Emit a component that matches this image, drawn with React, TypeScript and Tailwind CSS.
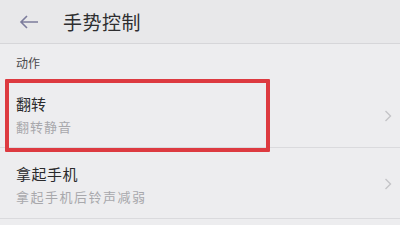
import React from "react";

const Chevron = () => (
  <svg width="8" height="12" viewBox="0 0 8 12" className="shrink-0">
    <path d="M1.5 1 L6.5 6 L1.5 11" fill="none" stroke="#c4c4c8" strokeWidth="1.4" />
  </svg>
);

export default function App() {
  return (
    <div
      className="w-[400px] h-[225px] overflow-hidden bg-[#ededef] flex flex-col"
      style={{ fontFamily: '"Noto Sans CJK SC", "Noto Sans", sans-serif' }}
    >
      <div className="h-[44px] shrink-0 bg-[#e8e8ea] border-b border-[#d6d6d9] flex items-center pl-[19px]">
        <svg width="20" height="14" viewBox="0 0 20 14">
          <path d="M8 1 L2 7 L8 13 M2 7 H19" fill="none" stroke="#7c7c9c" strokeWidth="1.6" />
        </svg>
        <span className="ml-[24px] text-[19px] leading-none text-[#2e2e30] tracking-[0.5px]">手势控制</span>
      </div>
      <div className="h-[35px] shrink-0 flex items-center pl-[16px] pt-[3px]">
        <span className="text-[12px] leading-none text-[#4a4a4c]">动作</span>
      </div>
      <div className="relative h-[69px] shrink-0 flex items-center pl-[16px] pr-[8px] border-b border-[#dadadd]">
        <div className="flex-1 flex flex-col gap-[9px] pt-[2px]">
          <span className="text-[15px] leading-none text-[#2a2a2c]">翻转</span>
          <span className="text-[13px] leading-none text-[#a8a8ac] tracking-[1px]">翻转静音</span>
        </div>
        <div className="mt-[6px]"><Chevron /></div>
        <div className="absolute left-[5px] top-[0px] w-[265px] h-[73px] border-[4px] border-[#dd3a40] rounded-[1px]" />
      </div>
      <div className="h-[71px] shrink-0 flex items-center pl-[16px] pr-[8px] border-b border-[#dadadd]">
        <div className="flex-1 flex flex-col gap-[9px] pt-[2px]">
          <span className="text-[15px] leading-none text-[#2a2a2c] tracking-[0.5px]">拿起手机</span>
          <span className="text-[13px] leading-none text-[#a8a8ac] tracking-[1.5px]">拿起手机后铃声减弱</span>
        </div>
        <div className="mt-[2px]"><Chevron /></div>
      </div>
    </div>
  );
}
